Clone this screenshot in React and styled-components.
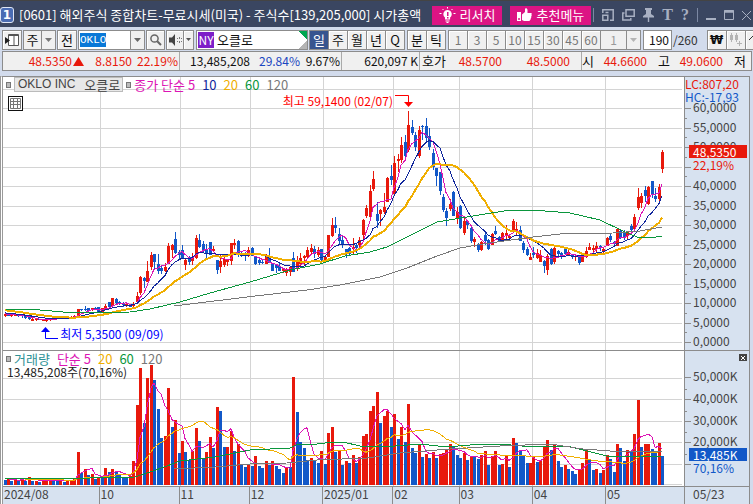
import React, { useEffect, useRef } from 'react'
import styled, { createGlobalStyle, css } from 'styled-components'

const RED = '#e8190c'
const BLUE = '#1258c8'
const MAGENTA = '#dc14b4'
const NAVY = '#10269c'
const GOLD = '#f0ae00'
const GREEN = '#0a963c'
const GRAY = '#787878'

const BARS = 190
const STEP = 3.48
const PLOT_W = 681
const PRICE_H = 273
const VOLUME_H = 135
const PRICE_ZERO = 265
const MONTHS = [
  ['2024/08', 97],
  ['10', 80],
  ['11', 70],
  ['12', 73],
  ['2025/01', 70],
  ['02', 66],
  ['03', 73],
  ['04', 73],
  ['05', 79],
]

// direction, high, body top, body bottom, low (3.9 units per dollar)
const CANDLES = `
r 29 28 26 25|b 28 28 26 26|r 28 28 26 25|r 28 27 26 26|b 28 27 26 25|b 28 27 26 24|b 26 26 24 23|b 26 26 23 22|r 25 23 21 21|r 24 23 22 21
b 23 23 22 22|r 23 22 21 21|r 22 22 21 20|r 24 23 22 21|b 24 24 23 22|r 25 25 23 23|r 26 25 24 23|b 26 25 24 24|b 26 26 24 24|r 26 25 24 23
r 27 26 25 24|r 33 33 26 26|b 33 33 32 31|b 36 33 32 31|b 34 34 31 31|r 34 34 32 31|b 35 34 33 32|b 35 35 30 30|r 34 34 30 30|r 38 36 32 32
b 40 40 35 35|r 44 44 36 35|b 44 43 39 37|b 41 40 38 37|b 40 38 37 35|r 39 38 36 35|b 38 37 35 35|r 40 38 36 35|r 50 46 40 38|r 66 65 49 47
b 65 64 61 54|r 81 71 60 60|r 90 87 75 72|b 88 88 80 72|b 88 78 71 68|b 76 74 71 68|r 79 75 71 70|r 99 96 78 78|r 98 97 92 84|b 110 103 89 88
b 92 90 87 83|b 97 92 83 83|r 83 82 77 72|b 86 85 80 77|r 89 85 81 77|r 107 104 84 83|b 108 102 95 94|b 101 98 92 90|b 98 93 88 83|b 100 100 87 87
r 96 93 91 90|b 82 82 72 68|r 87 81 75 69|r 86 83 77 75|r 83 82 80 76|r 99 99 81 77|r 103 99 97 93|b 102 101 87 85|b 90 88 86 85|b 90 87 86 81
r 95 92 86 85|b 95 94 86 86|b 86 86 78 77|b 83 82 79 77|b 82 80 79 78|r 88 86 78 78|b 94 86 79 79|b 79 79 71 71|b 78 77 74 69|b 80 76 71 71
r 74 73 71 69|r 74 73 69 66|r 76 75 70 66|b 90 84 70 70|r 86 82 74 71|r 89 84 78 74|r 87 86 84 76|r 95 92 85 84|r 98 94 90 88|b 96 93 88 84
r 95 92 87 85|b 93 93 82 78|r 87 85 82 80|r 107 107 85 85|r 124 117 106 105|b 125 117 114 109|b 114 108 101 97|b 107 102 97 94|b 93 93 88 84|b 95 94 88 86
r 104 95 93 88|b 99 97 94 89|r 105 102 97 94|r 123 122 107 103|r 137 134 126 124|r 157 151 125 125|r 171 163 153 151|b 140 128 121 114|r 133 132 128 116|r 149 135 130 128
r 165 164 140 140|b 177 166 162 157|r 186 179 148 148|r 188 183 181 170|r 205 197 182 179|b 207 200 186 182|r 231 217 192 190|b 222 215 209 207|b 210 207 195 191|r 216 212 186 184
b 217 216 215 202|b 224 216 204 201|b 214 206 195 192|b 193 189 175 172|b 174 174 166 156|b 170 170 151 147|b 148 145 132 130|b 134 131 124 116|r 143 138 133 131|b 151 150 126 126
r 135 130 123 118|b 137 136 114 113|r 126 121 109 107|b 122 121 117 113|b 115 114 101 99|r 105 103 100 95|b 99 97 92 90|r 101 100 92 91|b 109 107 101 97|b 103 102 93 92
r 109 108 97 97|b 116 111 108 107|b 106 105 101 101|r 110 109 101 100|r 117 109 106 103|r 107 106 104 101|r 123 121 112 111|r 120 113 111 107|b 116 112 101 101|b 101 99 92 89
b 95 93 87 86|r 89 85 82 82|b 95 89 87 84|r 93 89 84 83|r 92 87 80 80|b 82 81 76 69|r 88 86 72 67|b 94 93 78 77|r 96 94 80 78|b 92 91 88 85
b 90 89 86 83|b 95 94 88 87|r 92 90 87 86|b 88 87 86 83|r 87 86 85 81|b 87 85 79 77|r 87 86 80 80|r 95 91 85 84|r 99 95 92 92|r 97 94 92 89
r 100 96 93 89|b 97 96 95 91|r 94 93 91 88|r 105 104 96 96|b 108 106 102 100|b 101 100 98 97|r 114 113 96 96|b 112 111 104 103|b 112 110 104 102|r 111 110 106 102
b 118 116 112 109|r 128 125 113 112|r 154 145 134 132|r 149 146 139 134|b 156 152 146 140|r 156 155 138 137|b 161 161 147 144|b 154 146 143 140|r 158 155 143 139|r 192 190 173 169
`
  .trim()
  .split(/[|\n]/)
  .map((row) => {
    const [dir, ...levels] = row.split(' ')
    const [high, top, bottom, low] = levels.map(Number)
    return { up: dir === 'r', high, top, bottom, low }
  })

// millions of shares
const VOLUMES = [
  2.5, 2.6, 1.9, 2.2, 2, 3.2, 2, 3.8, 2, 2, 1.4, 2, 2, 3, 2.3, 2.2, 2.2, 1.4, 1.8, 1.8,
  2.8, 15.3, 5.7, 7.4, 4.8, 4.9, 2.8, 3.5, 3.4, 7.9, 6, 7.4, 6, 4.5, 3.7, 3.6, 4.3, 11.1, 37, 54.4,
  28.7, 49.6, 55.8, 48.7, 35.3, 21.8, 22.8, 45.1, 27, 30.2, 14.9, 20.5, 15.3, 11.6, 15.8, 26.4, 20.5, 12.4, 15.3, 22.2,
  17.2, 36.3, 34.4, 17.6, 17.7, 25.1, 15.8, 19, 9.8, 8.4, 9.8, 8.8, 13.5, 8.8, 7.9, 11.2, 9.3, 11.2, 8.8, 7.4,
  5.6, 8.4, 8.3, 50.2, 34, 20, 17.2, 11.6, 12.6, 11.2, 10.2, 15.8, 9.8, 24.2, 27, 15.3, 15.8, 9.3, 11.2, 10.2,
  14, 10.2, 13, 22.8, 23.7, 34.4, 36.7, 43.3, 28.8, 32.1, 34.4, 27, 33, 21.4, 27, 20, 37.7, 17.2, 14.9, 18.6,
  13, 14.4, 12.6, 15.3, 12.6, 14.4, 14.9, 16.7, 19, 17.7, 14, 12.6, 14.9, 11.6, 13.5, 13, 12, 14, 15.8, 9.3,
  13.5, 15.8, 9.3, 9.8, 14, 8.4, 21.8, 19.5, 16.3, 14, 10.2, 10.3, 13, 10.7, 11.2, 17.7, 20.9, 16.3, 18.6, 11.2,
  8.4, 9.3, 7.4, 6.5, 5.1, 7.4, 10.2, 16.3, 11.6, 7, 7.4, 5.6, 7, 14, 12, 6, 19, 17.2, 11.2, 16.3,
  15.3, 23.7, 39.5, 17.7, 19, 19, 16.7, 15.3, 19.5, 13.5,
]

const PRICE_MA60 = '2,232 37,233 72,236 97,235.5 127,235 147,232 177,225 207,216 247,205 287,193 317,187 342,179 367,175 384,170 404,160 434,145 470,139 507,133 530,133 567,136 597,143 620,154 634,160 647,161 659,159'
const PRICE_MA120 = '171,229 244,220 304,213 337,208 377,200 404,191 434,179 457,171 480,167 494,165 530,160 557,157 610,156 637,154 659,150'
const VOLUME_MA60 = '2,127 37,127 67,128 87,127 132,126 147,121 164,115 177,110 212,106 247,99 287,97 295,93 314,93 330,91 340,91 357,95 380,96 417,93 444,96 467,94 497,93 530,96 564,95 580,99 604,105 617,106 659,105'
const VOLUME_MA120 = '171,118 212,116 247,113 284,112 314,109 364,107 397,102 447,98 497,95 547,93 560,95 580,98 607,100 659,100'

const barX = (i) => Math.round(1.5 + i * STEP)

function average(values, size, before) {
  const all = [...before, ...values]
  return values.map((_, i) => {
    const end = i + before.length + 1
    const part = all.slice(Math.max(0, end - size), end)
    return part.reduce((a, b) => a + b, 0) / part.length
  })
}

const closes = CANDLES.map((c) => (c.up ? c.top : c.bottom))
const closesBefore = [38, 37, 36, 36, 35, 34, 34, 33, 33, 32, 31, 31, 30, 30, 29, 29, 28, 28, 28]
const volumesBefore = [4, 3, 3, 3, 3, 3, 3, 3, 3, 3, 3, 3, 3, 3, 3, 3, 3, 3, 3]

const priceLine = (size) =>
  average(closes, size, closesBefore)
    .map((v, i) => `${barX(i)},${(PRICE_ZERO - v).toFixed(1)}`)
    .join(' ')
const volumeLine = (size) =>
  average(VOLUMES, size, volumesBefore)
    .map((v, i) => `${barX(i)},${(VOLUME_H - 1 - v * 2.15).toFixed(1)}`)
    .join(' ')

const monthLines = MONTHS.slice(0, -1).reduce((list, [, width]) => {
  list.push((list[list.length - 1] || 0) + width)
  return list
}, [])

function Line({ points, color, width = 1 }) {
  return <polyline points={points} fill="none" stroke={color} strokeWidth={width} />
}

function PricePlot() {
  const rows = Array.from({ length: 14 }, (_, i) => Math.round(PRICE_ZERO - i * 19.5))
  return (
    <Plot viewBox={`0 0 ${PLOT_W} ${PRICE_H}`} preserveAspectRatio="none" aria-label="price">
      {rows.map((y) => <rect key={y} x="0" y={y} width={PLOT_W - 2} height="1" fill="#d4d4d4" />)}
      {monthLines.map((x) => <rect key={x} x={x} y="0" width="1" height={PRICE_H} fill="#d4d4d4" />)}
      {CANDLES.map((c, i) => {
        const color = c.up ? RED : BLUE
        return (
          <g key={i} fill={color}>
            <rect x={barX(i)} y={PRICE_ZERO - c.high} width="1" height={Math.max(1, c.high - c.low)} />
            <rect x={barX(i) - 1} y={PRICE_ZERO - c.top} width="3" height={Math.max(1, c.top - c.bottom)} />
          </g>
        )
      })}
      <Line points={priceLine(5)} color={MAGENTA} />
      <Line points={priceLine(10)} color={NAVY} />
      <Line points={priceLine(20)} color={GOLD} width={2} />
      <Line points={PRICE_MA60} color={GREEN} />
      <Line points={PRICE_MA120} color={GRAY} />
    </Plot>
  )
}

function VolumePlot() {
  const rows = [1, 2, 3, 4, 5].map((n) => Math.round(VOLUME_H - 1 - n * 21.5))
  return (
    <Plot viewBox={`0 0 ${PLOT_W} ${VOLUME_H}`} preserveAspectRatio="none" aria-label="volume">
      {[...rows, VOLUME_H - 2].map((y) => <rect key={y} x="0" y={y} width={PLOT_W - 2} height="1" fill="#d4d4d4" />)}
      {monthLines.map((x) => <rect key={x} x={x} y="0" width="1" height={VOLUME_H} fill="#d4d4d4" />)}
      {VOLUMES.map((v, i) => {
        const h = Math.round(v * 2.15)
        const up = i > 0 && v >= VOLUMES[i - 1]
        return <rect key={i} x={barX(i) - 1} y={VOLUME_H - 1 - h} width="3" height={h} fill={up ? RED : BLUE} />
      })}
      <Line points={volumeLine(5)} color={MAGENTA} />
      <Line points={volumeLine(20)} color={GOLD} />
      <Line points={VOLUME_MA60} color={GREEN} />
      <Line points={VOLUME_MA120} color={GRAY} />
    </Plot>
  )
}

function Caret() {
  return (
    <svg width="7" height="4" viewBox="0 0 7 4" aria-hidden="true">
      <path d="M0 0h7L3.5 4z" fill="currentColor" />
    </svg>
  )
}

function TitleIcons() {
  return (
    <WindowButtons>
      <Separator />
      <IconButton aria-label="dock">
        <svg width="12" height="12" viewBox="0 0 12 12" fill="none" stroke="currentColor" strokeWidth="1.5">
          <path d="M.8 4V.8h10.400v10.400H8M.8 6.200h5v5h-5zM3.500 3.500h3" />
        </svg>
      </IconButton>
      <IconButton aria-label="duplicate">
        <svg width="13" height="12" viewBox="0 0 13 12" fill="none" stroke="currentColor" strokeWidth="1.500">
          <path d="M4 .8h8.200v6.400H4zM2.500 4H.8v7h8V9" />
        </svg>
      </IconButton>
      <IconButton aria-label="pin">
        <svg width="11" height="14" viewBox="0 0 11 14" fill="currentColor">
          <path d="M2 0h7v2H8v4l3 2v1.500H6.200V14H4.800V9.500H0V8l3-2V2H2z" />
        </svg>
      </IconButton>
      <Glyph aria-label="text">T</Glyph>
      <Glyph aria-label="help">?</Glyph>
      <Separator />
      <IconButton aria-label="minimize">
        <svg width="10" height="12" viewBox="0 0 10 12"><path d="M0 9h10v2H0z" fill="currentColor" /></svg>
      </IconButton>
      <IconButton aria-label="maximize">
        <svg width="10" height="10" viewBox="0 0 10 10" fill="none" stroke="currentColor">
          <path d="M.5.5h9v9h-9zM0 2h10" /><path d="M0 1.500h10" strokeWidth="2" />
        </svg>
      </IconButton>
      <IconButton aria-label="close">
        <svg width="9" height="9" viewBox="0 0 9 9" stroke="currentColor"><path d="M0 0l9 9M9 0L0 9" /></svg>
      </IconButton>
    </WindowButtons>
  )
}

function TitleBar() {
  return (
    <Header>
      <WindowNumber>1</WindowNumber>
      <Title>[0601] 해외주식 종합차트-무료시세(미국) - 주식수[139,205,000] 시가총액</Title>
      <PinkButton>
        <svg width="17" height="17" viewBox="0 0 17 17" aria-hidden="true">
          <path d="M8.500 3a4.200 4.200 0 0 1 2.600 7.500v2H6v-2A4.200 4.200 0 0 1 8.500 3z" fill="#fff" />
          <path d="M6.500 13.500h4v1h-4zM7.500 15h2v1h-2z" fill="#fff" />
          <path d="M8.500 0v1.500M3.500 2l1 1M13.500 2l-1 1M.5 6.500h2M14.500 6.500h2" stroke="#fff" />
          <path d="M8 5h1.500v4H8zM8 10h1.500v1.500H8z" fill="#dc1484" />
        </svg>
        리서치
      </PinkButton>
      <PinkButton $last>
        <svg width="15" height="14" viewBox="0 0 15 14" aria-hidden="true">
          <path d="M0 4h4v9H0z" fill="#fff" />
          <circle cx="2" cy="11" r="1" fill="#dc1484" />
          <path d="M5 6.500L8 4V1c0-1 2.500-1 2.500 1v3H14c1 0 1 1.500.3 1.800.6.500.5 1.500-.2 1.800.4.600.2 1.400-.4 1.700.3.700 0 1.400-.6 1.600-.1.700-.5 1.100-1.100 1.100H7L5 12z" fill="#fff" />
        </svg>
        추천메뉴
      </PinkButton>
      <TitleIcons />
    </Header>
  )
}

function Toolbar() {
  const code = useRef(null)
  useEffect(() => {
    code.current.focus()
    code.current.select()
  }, [])

  return (
    <Tools>
      <ToolButton $w={20} aria-label="layout">
        <svg width="14" height="14" viewBox="0 0 14 14" aria-hidden="true">
          <path d="M3.500 1.500h10v11h-10zM9 1.500v11M3 2.500h11" fill="#fff" stroke="#555" />
          <path d="M0 4l5 3.500L0 11z" fill="#222" />
        </svg>
      </ToolButton>
      <SelectBox $w={33}>
        <Select aria-label="market" defaultValue="주"><option>주</option></Select>
        <SelectArrow><Caret /></SelectArrow>
      </SelectBox>
      <ToolButton $w={20}>전</ToolButton>
      <Field $w={67}>
        <CodeInput ref={code} aria-label="code" defaultValue="OKLO" />
        <ArrowButton aria-label="recent codes"><Caret /></ArrowButton>
      </Field>
      <ToolButton $w={19} aria-label="search">
        <svg width="12" height="12" viewBox="0 0 12 12" fill="none" stroke="#666" strokeWidth="1.500" aria-hidden="true">
          <circle cx="4.500" cy="4.500" r="3.600" /><path d="M7.200 7.200L11 11" strokeWidth="2" />
        </svg>
      </ToolButton>
      <Group>
        <ToolButton $w={18} aria-label="sound">
          <svg width="13" height="12" viewBox="0 0 13 12" aria-hidden="true">
            <path d="M0 3.500h3L6 0v12L3 8.500H0z" fill="#444" />
            <path d="M8 4h1v1H8zM8 7h1v1H8zM10 3h1v2h-1zM10 7h1v2h-1zM12 4h1v1h-1zM12 7h1v1h-1z" fill="#777" />
          </svg>
        </ToolButton>
        <ToolButton $w={11} $dim aria-label="sound options">
          <svg width="5" height="3" viewBox="0 0 5 3" aria-hidden="true"><path d="M0 0h5L2.500 3z" fill="#555" /></svg>
        </ToolButton>
      </Group>
      <NameField>
        <Exchange>NY</Exchange>
        오클로
      </NameField>
      <Group>
        {['일', '주', '월', '년', 'Q'].map((t) => <ToolButton key={t} $w={20} $on={t === '일'}>{t}</ToolButton>)}
      </Group>
      <Group>
        {['분', '틱'].map((t) => <ToolButton key={t} $w={20}>{t}</ToolButton>)}
      </Group>
      <Group>
        {['1', '3', '5', '10', '15', '30', '45', '60'].map((t) => <ToolButton key={t} $w={20} $dim>{t}</ToolButton>)}
        <SelectBox $w={41} $dim>
          <Select aria-label="interval" defaultValue="1" disabled><option>1</option></Select>
          <SelectArrow $dim><Caret /></SelectArrow>
        </SelectBox>
      </Group>
      <CountLabel>
        <CountInput aria-label="bars shown" defaultValue={BARS} />
        /260
      </CountLabel>
      <Group>
        <ToolButton $w={20}><Won>₩</Won></ToolButton>
        <ToolButton $w={20} aria-label="candles">
          <svg width="14" height="13" viewBox="0 0 14 13" fill="#b4b4b4" aria-hidden="true">
            <path d="M1 2h3v5H1zM2 0h1v9H2zM6 2h3v5H6zM7 0h1v9H7zM10 8h1v5h-1zM8 10h5v1H8z" />
          </svg>
        </ToolButton>
        <ToolButton $w={20} aria-label="more">
          <svg width="12" height="12" viewBox="0 0 12 12" fill="none" stroke="#333" aria-hidden="true"><path d="M0 6l4-4 4 4" /></svg>
        </ToolButton>
      </Group>
    </Tools>
  )
}

function QuoteStrip() {
  return (
    <Quote>
      <Cell $w={82} $color={RED}>
        48.5350
        <svg width="11" height="9" viewBox="0 0 11 9" aria-hidden="true"><path d="M5.500 0L11 9H0z" fill={RED} /></svg>
      </Cell>
      <Cell $w={48} $color={RED}>8.8150</Cell>
      <Cell $w={47} $color={RED} $line>22.19%</Cell>
      <Cell $w={71}>13,485,208</Cell>
      <Cell $w={50} $color="#1a46c0">29.84%</Cell>
      <Cell $w={41} $line>9.67%</Cell>
      <Cell $w={78} $line>620,097 K</Cell>
      <NameCell $w={27}>호가</NameCell>
      <Cell $w={56} $color={RED}>48.5700</Cell>
      <Cell $w={68} $color={RED}>48.5000</Cell>
      <Cell $w={11} $line />
      <NameCell $w={13}>시</NameCell>
      <Cell $w={53} $color={RED}>44.6600</Cell>
      <NameCell $w={23}>고</NameCell>
      <Cell $w={53} $color={RED}>49.0600</Cell>
      <NameCell $w={23}>저</NameCell>
    </Quote>
  )
}

function App() {
  return (
    <Window>
      <GlobalStyle />
      <TitleBar />
      <Toolbar />
      <QuoteStrip />
      <Chart>
        <Pane>
          <PricePlot />
          <Legend>
            <Bullet />
            <Stock>OKLO INC<span>오클로</span></Stock>
            <Bullet />
            <Key $color={MAGENTA}>종가 단순 5</Key>
            <Key $color={NAVY}>10</Key>
            <Key $color={GOLD}>20</Key>
            <Key $color={GREEN}>60</Key>
            <Key $color={GRAY}>120</Key>
          </Legend>
          <GridButton aria-label="table">
            <svg width="11" height="11" viewBox="0 0 11 11" fill="none" stroke="#777" aria-hidden="true">
              <path d="M.5.500h10v10h-10zM0 3.500h11M0 6.500h11M3.500 0v11M7.500 0v11" />
            </svg>
          </GridButton>
          <HighMark>
            최고 59,1400 (02/07)
            <svg width="18" height="14" viewBox="0 0 18 14" aria-hidden="true">
              <path d="M0 2.500h13.500V10" fill="none" stroke="#f00" /><path d="M9 9h9l-4.500 5z" fill="#f00" />
            </svg>
          </HighMark>
          <LowMark>
            <svg width="18" height="14" viewBox="0 0 18 14" aria-hidden="true">
              <path d="M4.500 4v7.500H17" fill="none" stroke="#00f" /><path d="M0 5h9L4.500 0z" fill="#00f" />
            </svg>
            최저 5,3500 (09/09)
          </LowMark>
        </Pane>
        <PriceAxis>
          <Extremes>
            <Key $color={RED}>LC:807,20</Key>
            <Key $color={BLUE}>HC:-17,93</Key>
          </Extremes>
          <Scale>
            {[60, 55, 50, 45, 40, 35, 30, 25, 20, 15, 10, 5, 0].map((n) => <Mark key={n}>{n === 45 ? '' : `${n},0000`}</Mark>)}
          </Scale>
          <LastPrice>
            <Tag $color={RED}>48,5350</Tag>
            <Change $color={RED}>22,19%</Change>
          </LastPrice>
        </PriceAxis>

        <Pane $ruled>
          <VolumePlot />
          <Legend>
            <Bullet />
            <Key $color="#2d9196">거래량</Key>
            <Key $color={MAGENTA}>단순 5</Key>
            <Key $color={GOLD}>20</Key>
            <Key $color={GREEN}>60</Key>
            <Key $color={GRAY}>120</Key>
          </Legend>
          <VolumeNote>13,485,208주(70,16%)</VolumeNote>
        </Pane>
        <VolumeAxis>
          <CloseButton aria-label="close volume">
            <svg width="4" height="4" viewBox="0 0 4 4" stroke="#fff" aria-hidden="true"><path d="M0 0l4 4M4 0L0 4" /></svg>
          </CloseButton>
          <VolumeScale>
            {['50,000K', '40,000K', '30,000K', '20,000K', ''].map((t, i) => <Mark key={i}>{t}</Mark>)}
          </VolumeScale>
          <LastVolume>
            <Tag $color={BLUE}>13,485K</Tag>
            <Change $color={BLUE}>70,16%</Change>
          </LastVolume>
        </VolumeAxis>

        <Months>
          {MONTHS.map(([name, width]) => <Month key={name} $grow={width}>{name}</Month>)}
        </Months>
        <Today>05/23</Today>
      </Chart>
    </Window>
  )
}

export default App

const GlobalStyle = createGlobalStyle`
* {
box-sizing: border-box;
}
body {
margin: 0;
overflow: hidden;
background: #d5deee;
}
button, input, select {
font: inherit;
color: inherit;
margin: 0;
padding: 0;
}
`

const Window = styled.div`
min-height: 100vh;
display: flex;
flex-direction: column;
overflow: hidden;
white-space: nowrap;
background: #d2dbec;
color: #111;
font-family: 'Noto Sans CJK KR', sans-serif;
font-size: 13px;
line-height: 16px;
`

const Header = styled.header`
height: 27px;
display: flex;
align-items: center;
padding-top: 2px;
border-top: 1px solid #444;
background: #3a4661;
color: #fff;
`
const WindowNumber = styled.span`
width: 14px;
height: 16px;
margin-right: 5px;
border: 1px solid #dfe6f5;
border-radius: 3px;
background: #4a6cb3;
font: bold 12px/14px 'DejaVu Sans', sans-serif;
text-align: center;
flex-shrink: 0;
`
const Title = styled.h1`
flex: 1;
min-width: 0;
margin: 0;
overflow: hidden;
font-size: 13px;
font-weight: 400;
line-height: 20px;
`
const PinkButton = styled.button`
height: 19px;
display: flex;
align-items: center;
gap: 4px;
flex-shrink: 0;
padding: 0 7px;
margin-right: ${(props) => (props.$last ? '2px' : '8px')};
border: 0;
background: #dc1484;
color: #fff;
`
const WindowButtons = styled.div`
display: flex;
align-items: center;
gap: 8px;
padding-right: 2px;
color: #a8b0c2;
flex-shrink: 0;
`
const Separator = styled.span`
width: 1px;
height: 14px;
background: #7c88a3;
`
const IconButton = styled.button`
display: flex;
border: 0;
background: none;
`
const Glyph = styled.button`
border: 0;
background: none;
font: bold 16px/16px 'Liberation Serif', serif;
`

const Tools = styled.div`
height: 24px;
display: flex;
align-items: center;
gap: 1px;
padding: 1px 0 0 2px;
background: #d2dbec;
`
const control = css`
height: 20px;
flex-shrink: 0;
border: 1px solid #8c8c8c;
background: #f0f0f0;
`
const ToolButton = styled.button`
${control}
width: ${(props) => props.$w}px;
display: flex;
align-items: center;
justify-content: center;
background: ${(props) => (props.$on ? '#37558f' : '#f0f0f0')};
color: ${(props) => (props.$on ? '#fff' : props.$dim ? '#777' : '#111')};
font-size: ${(props) => (props.$dim ? '12px' : '13px')};
box-shadow: inset 1px 1px ${(props) => (props.$on ? '#37558f' : '#fff')};
`
const Group = styled.div`
display: flex;
margin-right: 1px;
> * + * {
margin-left: -1px;
}
`
const SelectBox = styled.span`
${control}
width: ${(props) => props.$w}px;
display: flex;
color: ${(props) => (props.$dim ? '#999' : '#111')};
font-size: ${(props) => (props.$dim ? '12px' : '13px')};
`
const Select = styled.select`
flex: 1;
min-width: 0;
appearance: none;
border: 0;
background: none;
text-align: center;
opacity: 1;
`
const SelectArrow = styled.span`
width: 14px;
display: flex;
align-items: center;
justify-content: center;
border-left: 1px solid #8c8c8c;
color: ${(props) => (props.$dim ? '#b4b4b4' : '#777')};
`
const Field = styled.div`
${control}
width: ${(props) => props.$w}px;
display: flex;
background: #fff;
`
const CodeInput = styled.input`
flex: 1;
min-width: 0;
border: 0;
outline: 0;
padding-left: 1px;
background: none;
font: 11px/14px 'Liberation Mono', monospace;
caret-color: #f58220;
&::selection {
background: #0a78d7;
color: #fff;
}
`
const ArrowButton = styled.button`
width: 14px;
display: flex;
align-items: center;
justify-content: center;
border: 0;
border-left: 1px solid #8c8c8c;
background: #f0f0f0;
color: #666;
`
const NameField = styled.div`
${control}
width: 112px;
display: flex;
align-items: center;
gap: 3px;
padding-left: 1px;
background:
linear-gradient(45deg, transparent 50%, #00a651 50%) right top / 8px 8px no-repeat,
linear-gradient(135deg, transparent 50%, #b4b4b4 50%) right bottom / 8px 8px no-repeat,
#fff;
`
const Exchange = styled.span`
width: 16px;
background: #7d1ec8;
color: #fff;
font-size: 12px;
text-align: center;
`
const CountLabel = styled.label`
display: flex;
align-items: center;
margin-right: 8px;
color: #333;
font-size: 12px;
`
const CountInput = styled.input`
${control}
width: 29px;
padding-right: 2px;
margin-right: 1px;
background: #fff;
color: #111;
text-align: right;
`
const Won = styled.span`
font-family: 'DejaVu Sans', sans-serif;
font-weight: bold;
font-size: 12px;
`

const Quote = styled.div`
height: 20px;
display: flex;
flex-shrink: 0;
margin: 0 1px 5px 2px;
border: 1px solid #8c8c8c;
background: #f0f0f0;
overflow: hidden;
`
const Cell = styled.span`
width: ${(props) => props.$w}px;
display: flex;
align-items: center;
justify-content: flex-end;
gap: 1px;
flex-shrink: 0;
padding-right: 1px;
color: ${(props) => props.$color || '#111'};
font-size: 12px;
border-right: ${(props) => (props.$line ? '1px solid #aaa' : '0')};
`
const NameCell = styled(Cell)`
font-size: 13px;
`

const Chart = styled.main`
flex: 1;
display: grid;
grid-template-columns: 1fr 65px;
grid-template-rows: 2fr 136px 18px;
margin-right: 3px;
border: solid #8c8c8c;
border-width: 1px 1px 0 1px;
border-left: 3px double #999;
background: #fff;
font-size: 12px;
color: #444;
`
const Pane = styled.section`
position: relative;
min-width: 0;
border-top: ${(props) => (props.$ruled ? '1px solid #8c8c8c' : '0')};
`
const Plot = styled.svg`
display: block;
position: absolute;
inset: 0;
width: 100%;
height: 100%;
shape-rendering: crispEdges;
`
const Legend = styled.div`
position: relative;
height: 15px;
display: flex;
align-items: center;
gap: 7px;
padding-left: 3px;
font-size: 13px;
`
const Bullet = styled.i`
width: 5px;
height: 6px;
margin-right: -4px;
border: 1px solid #777;
background: #bbb;
`
const Stock = styled.span`
display: flex;
gap: 9px;
height: 15px;
padding: 0 2px 0 3px;
margin-right: -4px;
border: 1px solid #bbb;
background: #e8e8e8;
font: 12px/13px 'Liberation Sans', sans-serif;
span {
font: 13px/13px 'Noto Sans CJK KR', sans-serif;
}
`
const Key = styled.span`
color: ${(props) => props.$color};
`
const GridButton = styled.button`
position: relative;
display: flex;
align-items: center;
justify-content: center;
width: 15px;
height: 15px;
margin: 4px 0 0 5px;
border: 1px solid #111;
background: #fff;
`
const HighMark = styled.div`
position: absolute;
right: 39.8%;
top: 6%;
display: flex;
align-items: flex-start;
gap: 2px;
color: #f00;
`
const LowMark = styled.div`
position: absolute;
left: 5.6%;
bottom: 3%;
display: flex;
gap: 1px;
color: #00f;
svg {
margin-top: 1px;
}
`
const VolumeNote = styled.div`
position: absolute;
top: 14px;
left: 4px;
line-height: 14px;
color: #222;
`

const axis = css`
position: relative;
background: #d7e2f0;
border-left: 1px solid #8c8c8c;
`
const PriceAxis = styled.aside`
${axis}
display: flex;
flex-direction: column;
`
const Extremes = styled.div`
display: flex;
flex-direction: column;
height: 26px;
margin-bottom: -3px;
line-height: 13px;
position: relative;
z-index: 1;
background: #d7e2f0;
`
const Scale = styled.ul`
flex: 1;
display: flex;
flex-direction: column;
justify-content: space-between;
margin: 0;
padding: 0;
list-style: none;
`
const Mark = styled.li`
position: relative;
height: 16px;
padding-left: 8px;
line-height: 14px;
&::before {
content: '';
position: absolute;
left: 0;
top: 8px;
width: 6px;
height: 1px;
background: #8c8c8c;
}
&:not(:first-child)::after {
content: '';
position: absolute;
left: 0;
top: -2px;
width: 2px;
height: 1px;
background: #8c8c8c;
}
`
const LastPrice = styled.div`
position: absolute;
top: 25%;
left: 4px;
right: 2px;
`
const Tag = styled.div`
height: 13px;
padding-left: 4px;
line-height: 13px;
background: ${(props) => props.$color};
color: #fff;
`
const Change = styled.div`
padding-left: 4px;
line-height: 13px;
color: ${(props) => props.$color};
`
const VolumeAxis = styled.aside`
${axis}
display: flex;
flex-direction: column;
border-top: 1px solid #8c8c8c;
`
const CloseButton = styled.button`
display: flex;
align-items: center;
justify-content: center;
align-self: flex-end;
width: 8px;
height: 7px;
margin: 3px 2px 0 0;
border: 0;
background: #444;
`
const VolumeScale = styled(Scale)`
margin: 8px 0 14px;
`
const LastVolume = styled.div`
position: absolute;
top: 97px;
left: 4px;
right: 2px;
`
const Months = styled.div`
display: flex;
border-top: 1px solid #8c8c8c;
background: #d7e2f0;
line-height: 14px;
`
const Month = styled.span`
flex: ${(props) => props.$grow} 0 0;
min-width: 0;
padding-left: 1px;
& + & {
border-left: 1px solid #8c8c8c;
}
`
const Today = styled.div`
padding-left: 8px;
border: solid #8c8c8c;
border-width: 1px 0 0 1px;
background: #d7e2f0;
line-height: 14px;
`
